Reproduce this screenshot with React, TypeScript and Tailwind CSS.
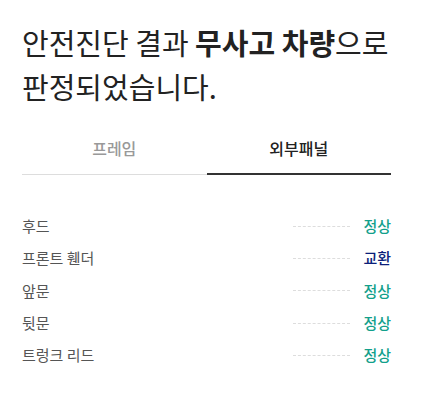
import React from "react";

const rows = [
  { name: "후드", status: "정상" },
  { name: "프론트 휀더", status: "교환" },
  { name: "앞문", status: "정상" },
  { name: "뒷문", status: "정상" },
  { name: "트렁크 리드", status: "정상" },
];

export default function App() {
  return (
    <div
      className="bg-white min-h-screen w-[446px] pl-[22px] pr-[55px] pt-[20px]"
      style={{ fontFamily: '"Noto Sans CJK KR", "Noto Sans", sans-serif' }}
    >
      {/* Title */}
      <h1 className="text-[29px] leading-[44px] text-[#222]">
        안전진단 결과 <b className="font-bold">무사고 차량</b>으로 판정되었습니다.
      </h1>

      {/* Tabs */}
      <div className="flex mt-[17px]">
        <div className="flex-1 h-[50px] pb-[3px] flex items-center justify-center text-[16px] font-medium text-[#999] border-b border-[#ddd]">
          프레임
        </div>
        <div className="flex-1 h-[50px] pb-[3px] flex items-center justify-center text-[16px] font-medium text-[#222] border-b-2 border-[#333]">
          외부패널
        </div>
      </div>

      {/* Rows */}
      <div className="mt-[40px] flex flex-col gap-[10px]">
        {rows.map((r) => (
          <div key={r.name} className="flex items-center h-[22.3px] text-[15px]">
            <span className="text-[#555] flex-1">{r.name}</span>
            <span className="w-[57px] border-t border-dashed border-[#ddd] mr-[13px]" />
            <span
              className={
                r.status === "교환"
                  ? "font-medium text-[#0b1f7a]"
                  : "font-medium text-[#13a08b]"
              }
            >
              {r.status}
            </span>
          </div>
        ))}
      </div>
    </div>
  );
}
